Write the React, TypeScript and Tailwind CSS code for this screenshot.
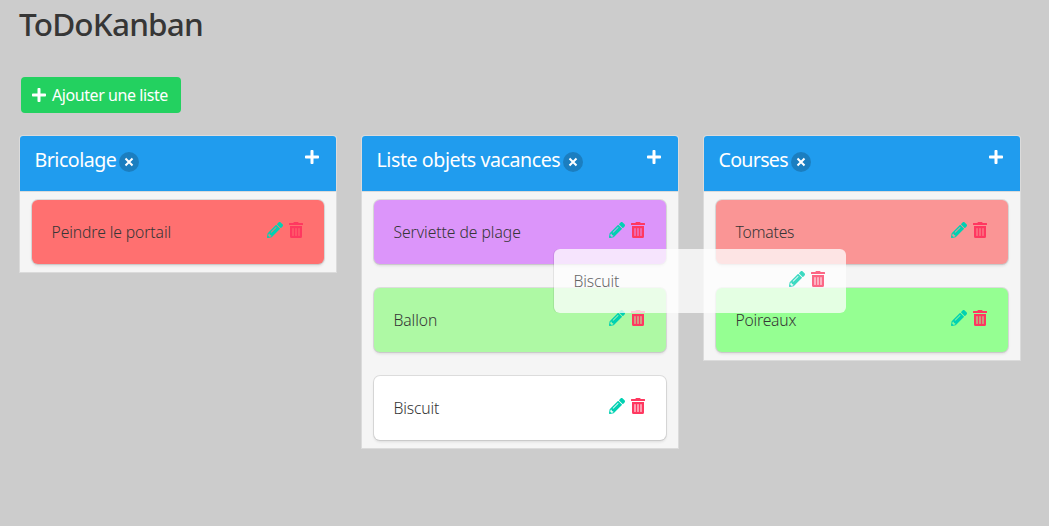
import { FaPencilAlt, FaPlus, FaTrashAlt } from 'react-icons/fa';

type Task = { label: string; color: string; spacing: string };
type List = { title: string; spacing: string; tasks: Task[] };

const lists: List[] = [
  {
    title: 'Bricolage',
    spacing: 'tracking-[-0.5px]',
    tasks: [{ label: 'Peindre le portail', color: 'bg-[#ff7070]', spacing: 'tracking-[-0.09px]' }],
  },
  {
    title: 'Liste objets vacances',
    spacing: 'tracking-[-0.43px]',
    tasks: [
      { label: 'Serviette de plage', color: 'bg-[#dc95fa]', spacing: 'tracking-[-0.05px]' },
      { label: 'Ballon', color: 'bg-[#aef9a4]', spacing: 'tracking-[-0.1px]' },
      { label: 'Biscuit', color: 'bg-white', spacing: 'tracking-[-0.15px]' },
    ],
  },
  {
    title: 'Courses',
    spacing: 'tracking-[-0.7px]',
    tasks: [
      { label: 'Tomates', color: 'bg-[#fa9595]', spacing: 'tracking-[-0.22px]' },
      { label: 'Poireaux', color: 'bg-[#95ff92]', spacing: 'tracking-[-0.22px]' },
    ],
  },
];

function TaskContent({ task }: { task: Task }) {
  return (
    <>
      <span className={`whitespace-nowrap text-[15.7px] leading-6 font-light ${task.spacing}`}>{task.label}</span>
      <span className="mb-[5px] flex gap-[6px]">
        <FaPencilAlt className="size-4 text-[#00d1b2]" />
        <FaTrashAlt className="h-4 w-[14px] text-[#ff3860]" />
      </span>
    </>
  );
}

function Card({ task }: { task: Task }) {
  return (
    <div
      className={`flex h-16 items-center justify-between rounded-md pr-[21px] pl-[19.5px] text-[#363636] shadow-[0_2px_3px_rgba(10,10,10,0.1),0_0_0_1px_rgba(10,10,10,0.1)] ${task.color}`}
    >
      <TaskContent task={task} />
    </div>
  );
}

function Column({ list }: { list: List }) {
  return (
    <section className="w-[316px] rounded-t-[3px] bg-[#f5f5f5] shadow-[0_0_0_1px_#dbdbdb]">
      <header className="flex h-14 items-start justify-between rounded-t-[3px] border-b border-[#dbdbdb] bg-[#209cee] pt-[9px] pr-[17px] pl-[14.5px] text-white">
        <div className="flex items-center">
          <h2 className={`whitespace-nowrap text-[19.6px] leading-[30px] ${list.spacing}`}>{list.title}</h2>
          <button aria-label="Supprimer" className="mt-[4px] ml-[3px] grid size-5 place-items-center rounded-full bg-[#0a0a0a]/20">
            <svg viewBox="0 0 20 20" className="size-5" stroke="currentColor" strokeWidth="2">
              <path d="M6.5 6.5l7 7M13.5 6.5l-7 7" />
            </svg>
          </button>
        </div>
        <FaPlus className="mt-[4px] h-4 w-[14px]" />
      </header>
      <div className="flex flex-col gap-6 px-3 py-2">
        {list.tasks.map((task) => (
          <Card key={task.label} task={task} />
        ))}
      </div>
    </section>
  );
}

export default function App() {
  return (
    <main className="relative h-[526px] overflow-hidden bg-[#cccccc] font-['Noto_Sans','Open_Sans',sans-serif]">
      <h1 className="pt-[6px] pl-[19px] text-[31.5px] leading-9 font-medium tracking-[-0.8px] text-[#363636]">
        <span>ToDoKanban</span>
      </h1>
      <button className="mt-[35px] ml-[21px] flex h-9 w-40 items-center rounded-[4px] bg-[#23d160] pl-[11px] text-[16px] text-white">
        <FaPlus className="h-4 w-[14px]" />
        <span className="ml-[6px] whitespace-nowrap tracking-[-0.43px]">Ajouter une liste</span>
      </button>
      <div className="mt-[23px] flex items-start gap-[26px] pl-5">
        {lists.map((list) => (
          <Column key={list.title} list={list} />
        ))}
      </div>
      <div className="absolute top-[249px] left-[554px] flex h-16 w-[292px] items-center justify-between rounded-md bg-white pr-[21px] pl-[19.5px] text-[#363636] opacity-75 shadow-[-1px_0_0_rgba(10,10,10,0.1)]">
        <TaskContent task={lists[1].tasks[2]} />
      </div>
    </main>
  );
}
